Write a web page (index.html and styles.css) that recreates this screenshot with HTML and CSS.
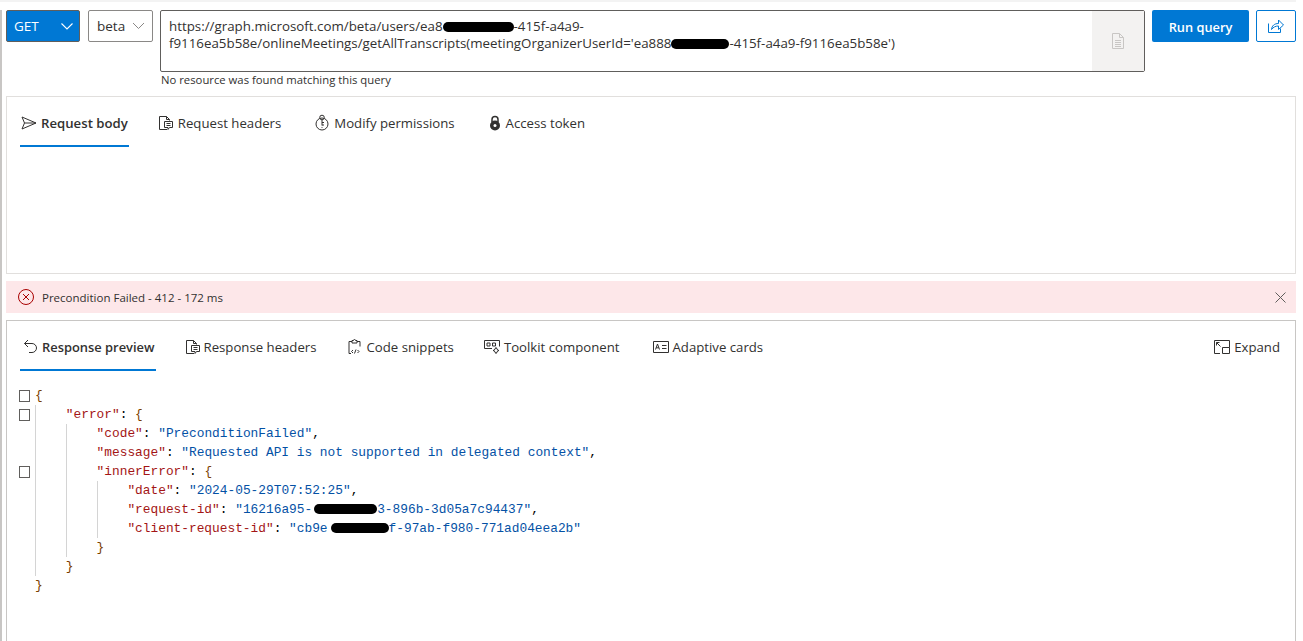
FILE: index.html
```html
<!DOCTYPE html>
<html lang="en">
<head>
<meta charset="utf-8">
<title>Graph Explorer</title>
<link rel="stylesheet" href="styles.css">
</head>
<body>
<div class="page">
<main class="frame">
  <section class="query">
    <div class="method">GET
      <svg class="chev" width="12" height="7" viewBox="0 0 12 7"><path d="M.5.5L6 6l5.500-5.500" fill="none" stroke="#fff" stroke-width="1.100"/></svg>
    </div>
    <div class="version">beta
      <svg class="chev" width="13" height="8" viewBox="0 0 13 8"><path d="M1 1l5.500 5.500L12 1" fill="none" stroke="#8a8886" stroke-width="1"/></svg>
    </div>
    <div class="url-col">
      <div class="url">
        <div class="url-text">
          <div>https://graph.microsoft.com/beta/users/ea8<span class="redact r-url1"></span>-415f-a4a9-</div>
          <div>f9116ea5b58e/onlineMeetings/getAllTranscripts(meetingOrganizerUserId='ea888<span class="redact r-url2"></span>-415f-a4a9-f9116ea5b58e')</div>
        </div>
        <div class="copy">
          <svg width="16" height="18" viewBox="0 0 16 18" fill="none" stroke="#c8c6c4"><path d="M2.500 1.500h7l4 4v11h-11zM9.500 1.500v4h4M5 8.500h6M5 10.500h6M5 12.500h6M5 14.500h6"/></svg>
        </div>
      </div>
      <div class="hint">No resource was found matching this query</div>
    </div>
    <button class="run">Run query</button>
    <button class="share">
      <svg width="18" height="16" viewBox="0 0 18 16" fill="none" stroke="#0078d4"><path d="M1.500 5.500v9h12v-4M4.500 11.500c.5-4 3-6 7-6v-3.500l5 5-5 4.500V8c-3 0-5 1-7 3.500z"/></svg>
    </button>
  </section>

  <section class="panel request">
    <nav class="tabs">
      <div class="tab active">
        <svg width="16" height="14" viewBox="0 0 16 14" fill="none" stroke="#323130"><path d="M1 1l14 6-14 6 2.500-6zM3.500 7H15"/></svg>
        <span>Request body</span>
      </div>
      <div class="tab">
        <svg width="16" height="16" viewBox="0 0 16 16" fill="none" stroke="#323130"><path d="M9 14.500H1.500v-13h7l3 3v1M8.500 1.500v3h3M6.500 6.500h8v6h-3l-1.500 2v-2H6.500zM8.500 8.500h4M8.500 10.500h4"/></svg>
        <span>Request headers</span>
      </div>
      <div class="tab tab-spaced">
        <svg width="16" height="17" viewBox="0 0 15 17" fill="none" stroke="#323130"><circle cx="7.500" cy="10" r="6"/><circle cx="7.500" cy="3.500" r="2.300"/><path d="M7.500 6v5.500M7.500 8.500h2M7.500 11h2M7.500 13v.8"/></svg>
        <span>Modify permissions</span>
      </div>
      <div class="tab tab-spaced">
        <svg width="14" height="16" viewBox="0 0 14 16"><path d="M4 7V4.500a3 3 0 016 0V7" fill="none" stroke="#323130" stroke-width="1.500"/><circle cx="7" cy="10.500" r="5" fill="#323130"/><circle cx="7" cy="10.500" r="1.500" fill="#fff"/></svg>
        <span>Access token</span>
      </div>
    </nav>
  </section>

  <section class="status">
    <svg width="16" height="16" viewBox="0 0 16 16" fill="none" stroke="#a80000"><circle cx="8" cy="8" r="7.500"/><path d="M5 5l6 6M11 5l-6 6"/></svg>
    <span class="status-text">Precondition Failed - 412 - 172 ms</span>
    <svg class="close" width="11" height="11" viewBox="0 0 11 11" fill="none" stroke="#605e5c"><path d="M.5.5l10 10M10.500.5l-10 10"/></svg>
  </section>

  <section class="panel response">
    <nav class="tabs">
      <div class="tab active tab-back">
        <svg width="15" height="15" viewBox="0 0 15 15" fill="none" stroke="#323130"><path d="M5 1L1.500 4.500 5 8M1.500 4.500H9a4.500 4.500 0 010 9H6"/></svg>
        <span>Response preview</span>
      </div>
      <div class="tab tab-tight">
        <svg width="16" height="16" viewBox="0 0 16 16" fill="none" stroke="#323130"><path d="M9 14.500H1.500v-13h7l3 3v1M8.500 1.500v3h3M6.500 6.500h8v6h-3l-1.500 2v-2H6.500zM8.500 8.500h4M8.500 10.500h4"/></svg>
        <span>Response headers</span>
      </div>
      <div class="tab">
        <svg width="16" height="16" viewBox="0 0 15 16" fill="none" stroke="#323130"><path d="M3.500 14.500h-2v-12h3M9.500 2.500h3v5M4.500 4V1.500h1.500a1 1 0 012 0h1.500V4zM5.500 11l-1.500 1.500L5.500 14M7 14.500l1.500-4M10 11l1.500 1.500L10 14"/></svg>
        <span>Code snippets</span>
      </div>
      <div class="tab">
        <svg width="16" height="14" viewBox="0 0 16 14" fill="none" stroke="#323130"><path d="M8 8.500H.5v-8h15v6M3 3h3v3H3zM8.500 3h3v3h-3z"/><circle cx="12" cy="10.500" r="2"/><path d="M12 7v1M12 13v1M9 10.500h1M14 10.500h1"/></svg>
        <span>Toolkit component</span>
      </div>
      <div class="tab tab-spaced">
        <svg width="16" height="12" viewBox="0 0 16 12" fill="none" stroke="#323130"><path d="M.5.500h15v11H.500zM2.500 8.500L4.500 3l2 5.500M3.200 6.800h2.600M9 4.500h4.500M9 7.500h4.500"/></svg>
        <span>Adaptive cards</span>
      </div>
      <div class="tab expand">
        <svg width="16" height="14" viewBox="0 0 16 14" fill="none" stroke="#323130"><path d="M6 13.500H.5V.5h15v7M8.500 7.500h7v6h-7zM2.500 2.500l4 4M2.500 5.500v-3h3"/></svg>
        <span>Expand</span>
      </div>
    </nav>
    <div class="editor">
      <div class="gutter">
        <div class="fold"><i></i></div>
        <div class="fold"><i></i></div>
        <div class="fold"></div>
        <div class="fold"></div>
        <div class="fold"><i></i></div>
      </div>
      <div class="code">
        <div class="ln"><b>{</b></div>
        <div class="blk">
          <div class="ln"><span class="k">"error"</span>: <b>{</b></div>
          <div class="blk">
            <div class="ln"><span class="k">"code"</span>: <span class="v">"PreconditionFailed"</span>,</div>
            <div class="ln"><span class="k">"message"</span>: <span class="v">"Requested API is not supported in delegated context"</span>,</div>
            <div class="ln"><span class="k">"innerError"</span>: <b>{</b></div>
            <div class="blk">
              <div class="ln"><span class="k">"date"</span>: <span class="v">"2024-05-29T07:52:25"</span>,</div>
              <div class="ln"><span class="k">"request-id"</span>: <span class="v">"16216a95-<span class="redact r-req"></span>3-896b-3d05a7c94437"</span>,</div>
              <div class="ln"><span class="k">"client-request-id"</span>: <span class="v">"cb9e<span class="redact r-client"></span>f-97ab-f980-771ad04eea2b"</span></div>
            </div>
            <div class="ln"><b>}</b></div>
          </div>
          <div class="ln"><b>}</b></div>
        </div>
        <div class="ln"><b>}</b></div>
      </div>
    </div>
  </section>
</main>
</div>
</body>
</html>
```
FILE: styles.css
```css
* { box-sizing: border-box; }
html, body { margin: 0; height: 100%; background: #fff; overflow: hidden; }
body { font-family: "Open Sans", "Noto Sans", sans-serif; font-size: 13.2px; color: #323130; }

.page { width: 1296px; height: 641px; border-top: 2px solid #f3f3f3; padding-top: 8px; }
.frame { height: 631px; border-left: 2px solid #c8c6c4; padding-left: 4px; display: flex; flex-direction: column; overflow: hidden; }

.query { display: flex; align-items: flex-start; height: 86px; }
.method { width: 74px; height: 32px; background: #0078d4; border: 1px solid #605e5c; border-radius: 2px; color: #fff; font-size: 13.5px; display: flex; align-items: center; justify-content: space-between; padding: 0 6px 0 7px; }
.version { width: 65px; height: 32px; margin-left: 8px; background: #fff; border: 1px solid #8a8886; border-radius: 2px; font-size: 13.5px; display: flex; align-items: center; justify-content: space-between; padding: 0 7px 0 8px; }
.chev { flex: none; }
.url-col { width: 985px; margin-left: 7px; }
.url { height: 62px; border: 1px solid #605e5c; border-radius: 2px; display: flex; font-size: 13.33px; line-height: 17px; }
.url-text { flex: 1; padding: 7px 8px; white-space: nowrap; overflow: hidden; }
.redact { display: inline-block; height: 10px; background: #000; border-radius: 5px; vertical-align: -1px; }
.r-url1 { width: 71px; }
.r-url2 { width: 58px; }
.r-req { width: 63px; margin-left: 2px; }
.r-client { width: 58px; margin-left: 3px; }
.copy { width: 52px; background: #f3f2f1; display: flex; align-items: center; justify-content: center; }
.hint { font-size: 11.3px; line-height: 16px; padding-left: 1px; }
.run { width: 97px; height: 32px; margin-left: 7px; padding: 2px 0 0; background: #0078d4; border: 0; border-radius: 2px; color: #fff; font: 600 12.8px "Open Sans", sans-serif; }
.share { width: 40px; height: 32px; margin-left: 7px; background: #fff; border: 1px solid #0078d4; border-radius: 2px; display: flex; align-items: center; justify-content: center; padding: 0; }

.panel { border: 1px solid #e1dfdd; }
.request { height: 178px; flex: none; }
.tabs { display: flex; align-items: flex-start; padding: 0 14px 0 13px; gap: 28px; }
.tab { height: 50px; display: flex; align-items: center; gap: 4px; white-space: nowrap; padding: 3px 1px 0; border-bottom: 2px solid transparent; }
.tab.active { font-weight: 600; border-bottom-color: #0078d4; }
.tab-back { padding-left: 3px; }
.tab-back span { font-size: 12.9px; }
.tab-tight { gap: 3px; }
.tab-spaced { margin-left: 3px; }
.tab.expand { margin-left: auto; }

.status { height: 32px; margin-top: 7px; flex: none; background: #fde7e9; display: flex; align-items: center; padding: 0 10px 0 12px; gap: 8px; }
.status-text { font-size: 11.5px; flex: 1; }

.response { margin-top: 7px; flex: 1; border-color: #c8c6c4; border-bottom: 0; }
.editor { display: flex; padding: 15px 0 0 12px; }
.gutter { width: 16px; flex: none; }
.fold { height: 19px; display: flex; align-items: center; }
.fold i { display: block; width: 11px; height: 12px; border: 1px solid #605e5c; }
.code { font-family: "Liberation Mono", monospace; font-size: 12.83px; line-height: 19px; color: #000; }
.ln { height: 19px; white-space: pre; }
.blk { border-left: 1px solid #d4d4d4; padding-left: 29.8px; }
.k { color: #a31515; }
.v { color: #0451a5; }
.code b { font-weight: 400; color: #7a3e00; }
```
